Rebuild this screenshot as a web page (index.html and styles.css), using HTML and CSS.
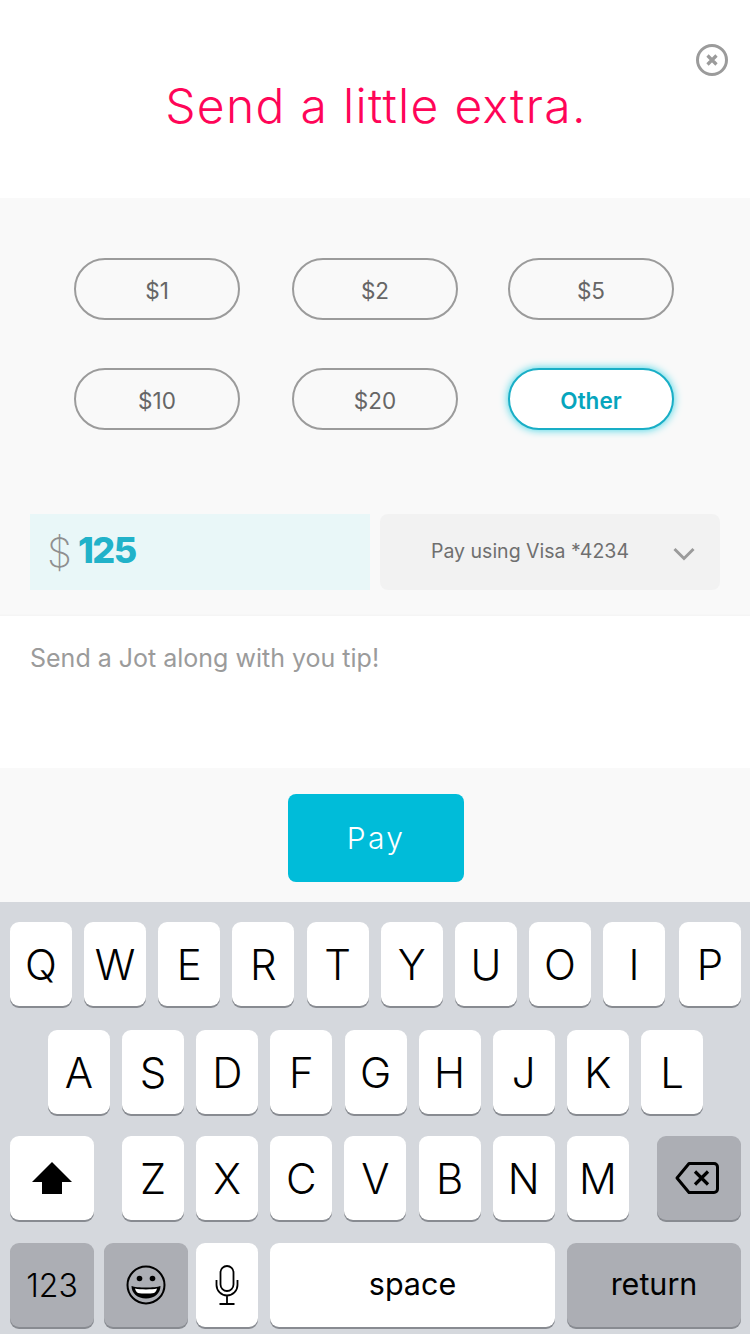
FILE: index.html
```html
<!DOCTYPE html>
<html lang="en">
<head>
  <meta charset="UTF-8" />
  <meta name="viewport" content="width=device-width, initial-scale=1" />
  <title>Send a little extra</title>
  <link rel="stylesheet" href="styles.css">
</head>
<body>
  <div class="screen">
    <header class="header">
      <h1>Send a little extra.</h1>
      <button class="close" aria-label="Close">
        <svg width="32" height="32" viewBox="0 0 32 32" fill="none" stroke="#9b9b9b">
          <circle cx="16" cy="16" r="14.5" stroke-width="3"/>
          <path d="M11.5 11.5l9 9M20.5 11.5l-9 9" stroke-width="3.2"/>
        </svg>
      </button>
    </header>

    <section class="tip">
      <div class="chips">
        <button class="chip">$1</button>
        <button class="chip">$2</button>
        <button class="chip">$5</button>
        <button class="chip">$10</button>
        <button class="chip">$20</button>
        <button class="chip active">Other</button>
      </div>
      <div class="amount-row">
        <div class="amount"><span class="dollar">$</span><span class="value">125</span></div>
        <div class="pay-using">
          <span>Pay using Visa *4234</span>
          <svg class="chevron" width="22" height="14" viewBox="0 0 22 14" fill="none" stroke="#9b9b9b" stroke-width="3">
            <path d="M1.5 2l9.500 9.500L20.500 2"/>
          </svg>
        </div>
      </div>
    </section>

    <div class="note">Send a Jot along with you tip!</div>

    <div class="footer">
      <button class="pay">Pay</button>
    </div>

    <div class="keyboard">
      <div class="row row1">
        <div class="key">Q</div><div class="key">W</div><div class="key">E</div><div class="key">R</div><div class="key">T</div><div class="key">Y</div><div class="key">U</div><div class="key">O</div><div class="key">I</div><div class="key last">P</div>
      </div>
      <div class="row row2">
        <div class="key">A</div><div class="key">S</div><div class="key">D</div><div class="key">F</div><div class="key">G</div><div class="key">H</div><div class="key">J</div><div class="key">K</div><div class="key">L</div>
      </div>
      <div class="row row3">
        <div class="key wide">
          <svg width="42" height="32" viewBox="0 0 42 32" fill="#000"><path d="M21 0L41 20H31V32H11V20H1z"/></svg>
        </div>
        <div class="letters">
          <div class="key">Z</div><div class="key">X</div><div class="key">C</div><div class="key">V</div><div class="key">B</div><div class="key">N</div><div class="key">M</div>
        </div>
        <div class="key wide dark backspace">
          <svg width="44" height="32" viewBox="0 0 44 32" fill="none" stroke="#000" stroke-width="3">
            <path d="M14 1.500H39a3.500 3.500 0 0 1 3.500 3.500V27a3.500 3.500 0 0 1-3.500 3.500H14L2 16z" stroke-linejoin="round"/>
            <path d="M20 9.500l13 13M33 9.500l-13 13" stroke-width="3.200"/>
          </svg>
        </div>
      </div>
      <div class="row row4">
        <div class="key wide dark num">123</div>
        <div class="key wide dark">
          <svg width="40" height="40" viewBox="0 0 40 40" fill="none" stroke="#000" stroke-width="2">
            <circle cx="20" cy="20" r="18.500"/>
            <circle cx="13.500" cy="13.500" r="2.800" fill="#000" stroke="none"/>
            <circle cx="26.500" cy="13.500" r="2.800" fill="#000" stroke="none"/>
            <path d="M5.500 21c5 2 24 2 29 0 0 7-6 12.500-14.500 12.500S5.500 28 5.500 21z" fill="#000" stroke="none"/>
            <path d="M9 23.500c5 1.200 17 1.200 22 0-.5 2-1.500 3.500-3 4.500-4 .8-12 .8-16 0-1.500-1-2.500-2.500-3-4.500z" fill="#fff" stroke="none"/>
          </svg>
        </div>
        <div class="key mic">
          <svg width="24" height="40" viewBox="0 0 24 40" fill="none" stroke="#000" stroke-width="1.800">
            <rect x="5.500" y="1" width="13" height="25" rx="6.500"/>
            <path d="M1.500 15v5a10.500 10.500 0 0 0 21 0v-5M12 31v8M4.500 39h15"/>
          </svg>
        </div>
        <div class="key small space">space</div>
        <div class="key dark small return">return</div>
      </div>
    </div>
  </div>
</body>
</html>
```

FILE: styles.css
```css
* {
  box-sizing: border-box;
}
body {
  margin: 0;
  font-family: Inter, "Open Sans", sans-serif;
  background: #fff;
}
button {
  font-family: inherit;
  border: none;
  padding: 0;
  cursor: pointer;
}
.screen {
  width: 750px;
  height: 1334px;
  overflow: hidden;
}

/* header */
.header {
  position: relative;
  height: 198px;
  padding: 76px 0 0 2px;
  background: #fff;
}
h1 {
  margin: 0;
  text-align: center;
  font-size: 48px;
  line-height: 60px;
  font-weight: 300;
  letter-spacing: 1.3px;
  color: #ff0558;
}
.close {
  position: absolute;
  top: 44px;
  left: 696px;
  width: 32px;
  height: 32px;
  background: none;
}

/* tip section */
.tip {
  height: 418px;
  padding: 60px 30px 0;
  background: #f9f9f9;
  box-shadow: inset 0 -3px 3px -3px #eee;
}
.chips {
  display: grid;
  grid-template-columns: 218px 216px 166px;
  grid-auto-rows: 62px;
  row-gap: 48px;
  margin-left: 44px;
}
.chip {
  width: 166px;
  padding-top: 3px;
  border: 2px solid #9b9b9b;
  border-radius: 31px;
  background: transparent;
  font-size: 22.5px;
  color: #666;
}
.chip.active {
  border-color: #19aec6;
  background: #fff;
  box-shadow: 0 0 8px #39d3e4;
  font-weight: 600;
  color: #06a5bd;
}
.amount-row {
  display: flex;
  gap: 10px;
  margin-top: 84px;
}
.amount {
  display: flex;
  align-items: center;
  width: 340px;
  height: 76px;
  padding-left: 17px;
  background: #e9f7f8;
}
.dollar {
  font-size: 40px;
  font-weight: 200;
  color: #8f8f8f;
}
.value {
  margin-left: 6px;
  margin-top: -4px;
  font-size: 36px;
  font-weight: 800;
  letter-spacing: -1.5px;
  color: #21b2c9;
}
.pay-using {
  display: flex;
  align-items: center;
  width: 340px;
  height: 76px;
  padding: 0 0 2px 51px;
  border-radius: 8px;
  background: #f2f2f2;
  font-size: 19.5px;
  color: #6f6f6f;
}
.chevron {
  margin-left: 44px;
  margin-top: 6px;
}

/* jot */
.note {
  height: 152px;
  padding: 26px 30px 0;
  background: #fff;
  font-size: 25px;
  line-height: 32px;
  color: #9b9b9b;
}

.footer {
  display: flex;
  justify-content: center;
  height: 134px;
  padding: 26px 0 0 2px;
  background: #f9f9f9;
}
.pay {
  width: 176px;
  height: 88px;
  border-radius: 8px;
  background: #00bcd9;
  color: #fff;
  font-size: 30px;
  font-weight: 300;
  letter-spacing: 2.4px;
}

/* keyboard */
.keyboard {
  height: 432px;
  padding-top: 20px;
  background: #d5d8dd;
  font-family: Inter, Roboto, sans-serif;
}
.row {
  display: flex;
  justify-content: space-between;
  padding: 0 9px 0 10px;
}
.row1 {
  justify-content: flex-start;
  gap: 12.15px;
}
.row1 .last {
  margin-left: auto;
}
.row2 {
  margin-top: 24px;
  padding: 0 47px 0 48px;
}
.row3 {
  margin-top: 22px;
}
.row4 {
  margin-top: 23px;
  justify-content: flex-start;
}
.key {
  display: flex;
  align-items: center;
  justify-content: center;
  width: 62px;
  height: 84px;
  border-radius: 9px;
  background: #fff;
  box-shadow: 0 2px 0 #888b91;
  font-size: 42px;
  font-weight: 300;
  color: #000;
}
.key.wide {
  width: 84px;
}
.key.dark {
  background: #acaeb4;
}
.key.num {
  font-size: 32px;
  font-weight: 300;
}
.key.small {
  padding-bottom: 4px;
  font-size: 30.5px;
  font-weight: 400;
}
.backspace svg {
  margin-left: -4px;
}
.letters {
  display: flex;
  justify-content: space-between;
  width: 507px;
}
.row4 .dark + .dark {
  margin-left: 10px;
}
.mic {
  margin-left: 8px;
}
.space {
  width: 285px;
  margin-left: 12px;
}
.return {
  width: 174px;
  margin-left: 12px;
}
```
